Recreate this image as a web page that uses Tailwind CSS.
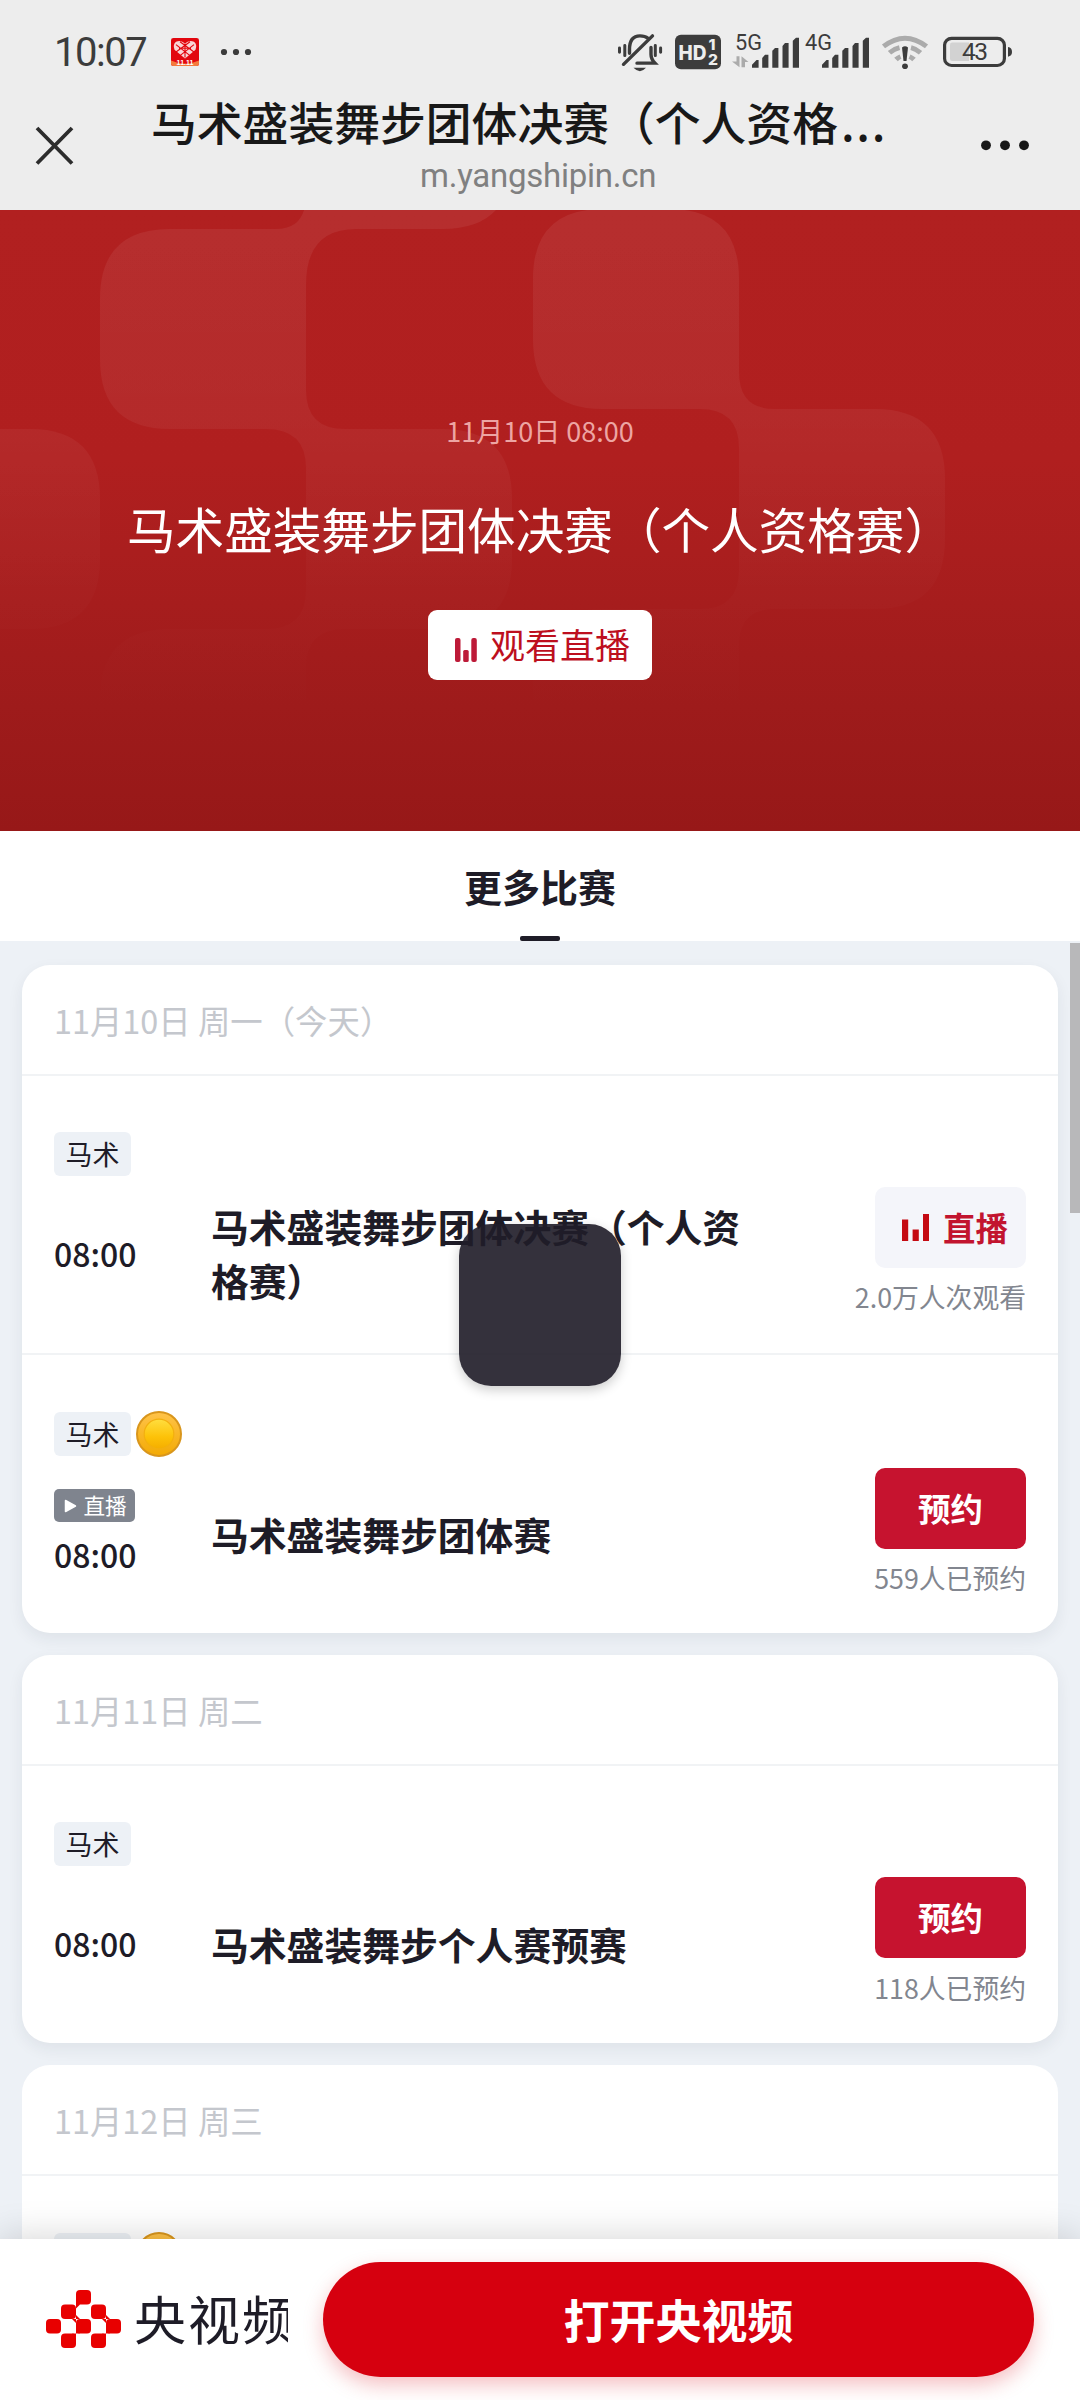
<!DOCTYPE html>
<html lang="zh-CN">
<head>
<meta charset="utf-8">
<title>马术盛装舞步团体决赛（个人资格赛）</title>
<script src="https://cdn.jsdelivr.net/npm/@tailwindcss/browser@4"></script>
</head>
<body class="w-[1080px] h-[2400px] overflow-hidden relative bg-[#edf1f6] font-['Noto_Sans_CJK_SC',sans-serif] text-[#1e1c27]">
<div class="h-full flex flex-col overflow-hidden">

  <header class="h-[210px] shrink-0 bg-[#ededed] flex flex-col">
    <div class="h-[100px] shrink-0 flex items-center pl-[54px] pr-[66px] text-[#3c3c3c]">
      <span class="w-[117px] whitespace-nowrap font-['Roboto'] text-[40px] leading-none tracking-[-1.5px] pt-[5px]">10:07</span>
      <svg class="w-[28px] h-[28px] mt-[4px]" viewBox="0 0 28 30" preserveAspectRatio="none">
        <rect width="28" height="30" rx="2.5" fill="#e2060e"/>
        <path d="M0 24Q14 31 28 24V27.500Q28 30 25.500 30H2.500Q0 30 0 27.500Z" fill="#f47a3c"/>
        <path d="M14 22L3.500 12.500Q1.500 7 5 4Q10 1.500 14 6Q18 1.500 23 4Q26.500 7 24.500 12.500Z" fill="#f9d5d6"/>
        <path d="M5 7L19 19M9 4L23 15M23 7L9 19M19 4L5 15M14 6V21M8 11H20" stroke="#e2060e" stroke-width="1.100" fill="none"/>
        <text x="14" y="29" font-family="Liberation Sans" font-weight="700" font-size="7" text-anchor="middle" fill="#fff">11.11</text>
      </svg>
      <svg class="w-[32px] h-[8px] ml-[21px] mt-[4px]" viewBox="0 0 32 8" fill="#3c3c3c"><circle cx="4" cy="4" r="3.100"/><circle cx="16" cy="4" r="3.100"/><circle cx="28" cy="4" r="3.100"/></svg>
      <svg class="w-[400px] h-[44px] ml-auto mt-[4px]" viewBox="614 30 400 44" fill="#3c3c3c">
        <g transform="scale(1 0.968)">
        <g fill="none" stroke="#3c3c3c" stroke-width="3.400" stroke-linecap="round">
          <path d="M629.500 55V51Q629.500 37 640 37Q645 37 648 39.500"/>
          <path d="M623.500 66.500L652.500 37"/>
          <path d="M651 49V56Q651 61 655 65.300H637"/>
          <path d="M619.500 49.500V54M624.800 47V57.500M655.300 47V57.500M660.600 49.500V54" stroke-width="3"/>
        </g>
        <path d="M633.500 70H646Q640 77 633.500 70Z"/>
        <rect x="675" y="36" width="46" height="35.500" rx="6"/>
        <g font-family="Inter" font-weight="800" fill="#ededed"><text x="678.500" y="61.500" font-size="21" textLength="28" lengthAdjust="spacingAndGlyphs">HD</text><text x="708.500" y="52" font-size="15.500" textLength="7" lengthAdjust="spacingAndGlyphs">1</text><text x="708" y="67" font-size="15.500" textLength="10" lengthAdjust="spacingAndGlyphs">2</text></g>
        <g font-family="Roboto" font-size="22"><text x="735" y="52" textLength="27" lengthAdjust="spacingAndGlyphs">5G</text><text x="805" y="52" textLength="27" lengthAdjust="spacingAndGlyphs">4G</text></g>
        <path d="M736.500 58H739.500V69.500L732 63.500H736.500ZM741.500 69.500V58L748.500 64H745V69.500Z" fill="#ababab"/>
        <g id="bars"><path d="M752 70V67L756.500 62H758.600V70ZM762.200 70V60L765 56.500H768.400V70ZM772.300 70V52.500L775 49.500H778.400V70ZM782.500 70V47.500L785 44.500H788.600V70ZM792.800 70V42L796 39H799V70Z"/></g>
        <use href="#bars" x="70"/>
        <g fill="none" stroke="#ababab" stroke-width="5"><path d="M883.500 48Q905 31 926.500 48"/><path d="M889.500 54.500Q894 50.500 899.500 49.300M911 49.300Q916 50.500 920.500 54.500"/><path d="M896 61.500Q898 59.500 900.500 58.500M909.500 58.500Q912 59.500 914 61.500"/></g>
        <path d="M902 49Q905 46.500 908 49L906.500 63H903.500Z"/><circle cx="905" cy="68.500" r="2.900"/>
        <rect x="944.600" y="39.600" width="59.800" height="28" rx="7" fill="none" stroke="#3c3c3c" stroke-width="3.200"/>
        <path d="M950 46Q950 44 952 44H969V63H952Q950 63 950 61Z" fill="#d2d2d2"/>
        <path d="M1008 48.500Q1012 49 1012 53.500Q1012 58 1008 58.500Z"/>
        <text x="975" y="62.500" font-family="Roboto" font-size="24.500" text-anchor="middle" textLength="26">43</text>
        </g>
      </svg>
    </div>
    <div class="flex h-[110px] shrink-0">
      <svg class="w-[151px] h-[90px] shrink-0" viewBox="0 0 151 90"><path d="M37 28L72 63.500M72 28L37 63.500" stroke="#2c2c2c" stroke-width="3.800" fill="none"/></svg>
      <div class="w-[776px] shrink-0 flex flex-col items-center">
        <div class="w-full whitespace-nowrap text-[45.800px] leading-[46px] h-[46px] -mt-[2px] text-[#181818] font-medium">马术盛装舞步团体决赛（个人资格<span class="tracking-[1.700px] pl-[3px]">...</span></div>
        <div class="self-start ml-[269px] whitespace-nowrap font-['Roboto'] text-[33px] leading-[46px] tracking-[-0.250px] text-[#808080] mt-[9px]">m.yangshipin.cn</div>
      </div>
      <svg class="w-[153px] h-[90px] shrink-0" viewBox="927 100 153 90" fill="#181818"><circle cx="986" cy="145.300" r="4.900"/><circle cx="1005" cy="145.300" r="4.900"/><circle cx="1024" cy="145.300" r="4.900"/></svg>
    </div>
  </header>

  <section class="h-[621px] shrink-0 relative text-white">
    <svg class="absolute inset-0 w-full h-full" viewBox="0 210 1080 621">
      <defs>
        <linearGradient id="hero" x1="0" y1="0" x2="0" y2="1"><stop offset="0" stop-color="#b12020"/><stop offset="0.400" stop-color="#b01f1f"/><stop offset="0.550" stop-color="#aa1e1e"/><stop offset="0.800" stop-color="#9e1b1b"/><stop offset="1" stop-color="#971818"/></linearGradient>
        <linearGradient id="fade" gradientUnits="userSpaceOnUse" x1="0" y1="210" x2="0" y2="720"><stop offset="0" stop-color="#fff" stop-opacity="0.065"/><stop offset="0.400" stop-color="#fff" stop-opacity="0.050"/><stop offset="0.750" stop-color="#fff" stop-opacity="0.014"/><stop offset="1" stop-color="#fff" stop-opacity="0"/></linearGradient>
      </defs>
      <rect y="210" width="1080" height="621" fill="url(#hero)"/>
      <g fill="url(#fade)">
        <path d="M306 29H512V159Q512 229 442 229H356Q306 229 306 285V390Q306 429 345 429H442Q512 429 512 499V559Q512 629 442 629H345Q306 629 306 668V760Q306 829 236 829H170Q100 829 100 759V699Q100 629 170 629H266Q306 629 306 590V468Q306 429 266 429H170Q100 429 100 359V299Q100 229 170 229H276Q306 229 306 195Z"/>
        <path d="M-106 429H30Q100 429 100 499V559Q100 629 30 629H-106Z"/>
        <path d="M603 209H669Q739 209 739 279V372Q739 409 774 409H875Q945 409 945 479V539Q945 609 875 609H775Q739 609 739 645V740Q739 809 669 809H603Q533 809 533 739V679Q533 609 603 609H700Q739 609 739 570V448Q739 409 700 409H603Q533 409 533 339V279Q533 209 603 209Z"/>
      </g>
    </svg>
    <div class="relative flex flex-col items-center pt-[201px]">
      <div class="text-[27px] leading-[40px] text-[#eda5a3]">11月10日 08:00</div>
      <div class="mt-[41px] text-[48.600px] leading-[72px] whitespace-nowrap">马术盛装舞步团体决赛（个人资格赛）</div>
      <div class="mt-[46px] w-[224px] h-[70px] rounded-[9px] bg-white flex items-center pl-[27px] text-[#bd0f1e]">
        <svg class="w-[22px] h-[24px] mt-[10px]" viewBox="0 0 22 24" fill="#bd1a38"><rect width="5.500" height="24" rx="2"/><rect x="8.200" y="12" width="5.500" height="12" rx="1.500"/><rect x="16.300" width="5.500" height="24" rx="2"/></svg>
        <span class="ml-[13px] -mt-[3px] text-[35px] leading-none">观看直播</span>
      </div>
    </div>
  </section>

  <nav class="h-[110px] shrink-0 bg-white flex flex-col items-center justify-between">
    <div class="text-[38px] leading-[56px] font-bold mt-[27px]">更多比赛</div>
    <div class="w-[40px] h-[5px] rounded-[2px] bg-[#1e1c27]"></div>
  </nav>

  <main class="px-[22px] pt-[24px] flex flex-col gap-[22px]">
    <section class="bg-white rounded-[28px] shadow-[0_6px_16px_rgba(30,40,60,0.07)]">
      <h2 class="h-[111px] border-b-2 border-[#f1f3f5] pl-[32px] text-[32.400px] leading-[110px] text-[#c4c7cd]">11月10日 周一（今天）</h2>
      <article class="h-[279px] border-b-2 border-[#f1f3f5] px-[32px] pt-[56px] relative">
        <div class="flex"><span class="w-[77px] h-[44px] rounded-[6px] bg-[#edf1f6] text-[27px] leading-[44px] text-center">马术</span></div>
        <div class="flex">
          <div class="w-[157px] pt-[57px] text-[32px] leading-[40px] font-medium">08:00</div>
          <div class="w-[560px] pt-[23px] text-[37.800px] leading-[54px] font-bold">马术盛装舞步团体决赛（个人资格赛）</div>
          <div class="flex-1 flex flex-col items-end pt-[11px]">
            <div class="w-[151px] h-[81px] rounded-[10px] bg-[#f4f5fa] flex items-center pl-[27px] text-[#c2142f]">
              <svg class="w-[27px] h-[27px]" viewBox="0 0 27 27" fill="#c40a12"><rect y="5.500" width="6.200" height="21.500"/><rect x="10.600" y="15.500" width="6.200" height="11.500"/><rect x="21" width="6.200" height="27"/></svg>
              <span class="ml-[14px] text-[32.400px] leading-none font-bold">直播</span>
            </div>
            <div class="mt-[9px] text-[26.800px] leading-[40px] text-[#82868f] whitespace-nowrap">2.0万人次观看</div>
          </div>
        </div>
      </article>
      <article class="h-[278px] px-[32px] pt-[57px]">
        <div class="flex items-center h-[44px]"><span class="w-[77px] h-[44px] rounded-[6px] bg-[#edf1f6] text-[27px] leading-[44px] text-center">马术</span>
          <svg class="w-[46px] h-[46px] ml-[5px]" viewBox="0 0 46 46"><defs><linearGradient id="rim" x1="0" y1="0" x2="0" y2="1"><stop offset="0" stop-color="#ffc34a"/><stop offset="1" stop-color="#f3aa03"/></linearGradient><linearGradient id="coin" x1="0" y1="0" x2="0" y2="1"><stop offset="0" stop-color="#ffde3f"/><stop offset="0.600" stop-color="#fdc208"/><stop offset="1" stop-color="#f5ae00"/></linearGradient></defs><circle cx="23" cy="23" r="22" fill="url(#rim)" stroke="#d9961c" stroke-width="2"/><circle cx="23" cy="23" r="14.800" fill="url(#coin)" stroke="#f3b00f" stroke-width="1.200"/></svg>
        </div>
        <div class="flex">
          <div class="w-[157px] pt-[33px]">
            <div class="w-[81px] h-[33px] rounded-[5px] bg-[#7f848e] text-white flex items-center pl-[10px]"><svg class="w-[13px] h-[14px]" viewBox="0 0 13 14"><path d="M1.500 1.500V12.500L11.500 7Z" fill="#fff" stroke="#fff" stroke-width="1.500" stroke-linejoin="round"/></svg><span class="ml-[6.500px] -mt-px text-[21.600px] leading-none">直播</span></div>
            <div class="mt-[12px] text-[32px] leading-[40px] font-medium">08:00</div>
          </div>
          <div class="w-[560px] pt-[51px] text-[37.800px] leading-[54px] font-bold">马术盛装舞步团体赛</div>
          <div class="flex-1 flex flex-col items-end pt-[12px]">
            <div class="w-[151px] h-[81px] rounded-[10px] bg-[#c6132f] text-white text-center text-[32.400px] leading-[80px] font-bold">预约</div>
            <div class="mt-[9px] text-[26.800px] leading-[40px] text-[#82868f] whitespace-nowrap">559人已预约</div>
          </div>
        </div>
      </article>
    </section>

    <section class="bg-white rounded-[28px] shadow-[0_6px_16px_rgba(30,40,60,0.07)]">
      <h2 class="h-[111px] border-b-2 border-[#f1f3f5] pl-[32px] text-[32.400px] leading-[110px] text-[#c4c7cd]">11月11日 周二</h2>
      <article class="h-[277px] px-[32px] pt-[56px]">
        <div class="flex"><span class="w-[77px] h-[44px] rounded-[6px] bg-[#edf1f6] text-[27px] leading-[44px] text-center">马术</span></div>
        <div class="flex">
          <div class="w-[157px] pt-[57px] text-[32px] leading-[40px] font-medium">08:00</div>
          <div class="w-[560px] pt-[51px] text-[37.800px] leading-[54px] font-bold">马术盛装舞步个人赛预赛</div>
          <div class="flex-1 flex flex-col items-end pt-[11px]">
            <div class="w-[151px] h-[81px] rounded-[10px] bg-[#c6132f] text-white text-center text-[32.400px] leading-[80px] font-bold">预约</div>
            <div class="mt-[10px] text-[26.800px] leading-[40px] text-[#82868f] whitespace-nowrap">118人已预约</div>
          </div>
        </div>
      </article>
    </section>

    <section class="bg-white rounded-[28px]">
      <h2 class="h-[111px] border-b-2 border-[#f1f3f5] pl-[32px] text-[32.400px] leading-[110px] text-[#c4c7cd]">11月12日 周三</h2>
      <article class="h-[277px] px-[32px] pt-[57px]">
        <div class="flex items-center h-[44px]"><span class="w-[77px] h-[44px] rounded-[6px] bg-[#edf1f6] text-[27px] leading-[44px] text-center"></span>
          <svg class="w-[46px] h-[46px] ml-[5px]" viewBox="0 0 46 46"><circle cx="23" cy="23" r="22" fill="url(#rim)" stroke="#d9961c" stroke-width="2"/><circle cx="23" cy="23" r="14.800" fill="url(#coin)" stroke="#f3b00f" stroke-width="1.200"/></svg>
        </div>
      </article>
    </section>
  </main>
</div>

<div class="absolute right-0 top-[943px] w-[10px] h-[270px] bg-[#b8b8ba]"></div>
<div class="absolute left-[459px] top-[1224px] w-[162px] h-[162px] rounded-[32px] bg-[#201d29]/91 shadow-[0_4px_12px_rgba(0,0,0,0.2)]"></div>

<footer class="absolute left-0 bottom-0 w-full h-[161px] bg-white shadow-[0_0_36px_rgba(0,0,0,0.18)] flex items-center pl-[46px] pr-[46px]">
  <svg class="w-[75px] h-[58px] -mt-[2px]" viewBox="0 0 75 58" fill="#e80000">
    <rect x="30" y="0" width="15" height="14.500" rx="4"/><rect x="15" y="14.500" width="15" height="14.500" rx="4"/><rect x="45" y="14.500" width="15" height="14.500" rx="4"/><rect x="0" y="29" width="15" height="14.500" rx="4"/><rect x="30" y="29" width="15" height="14.500" rx="4"/><rect x="60" y="29" width="15" height="14.500" rx="4"/><rect x="15" y="43.500" width="15" height="14.500" rx="4"/><rect x="45" y="43.500" width="15" height="14.500" rx="4"/>
    <path d="M26 14.500H30V10.500L34 14.500L30 18.500V14.500ZM30 25V29H26L30 33V29H34ZM60 25V29H56L60 33V29H64ZM30 39.500V43.500H26L30 47.500V43.500H34ZM60 39.500V43.500H56L60 47.500V43.500H64Z"/>
  </svg>
  <div class="ml-[13px] -mt-[3px] w-[154px] overflow-hidden whitespace-nowrap text-[52px] leading-[64px] tracking-[2px] font-normal">央视频</div>
  <div class="ml-[35px] w-[711px] h-[115px] rounded-full bg-[#d6000f] text-white text-center text-[46px] leading-[113px] font-bold shadow-[0_8px_20px_rgba(214,0,15,0.25)]">打开央视频</div>
</footer>
</body>
</html>
